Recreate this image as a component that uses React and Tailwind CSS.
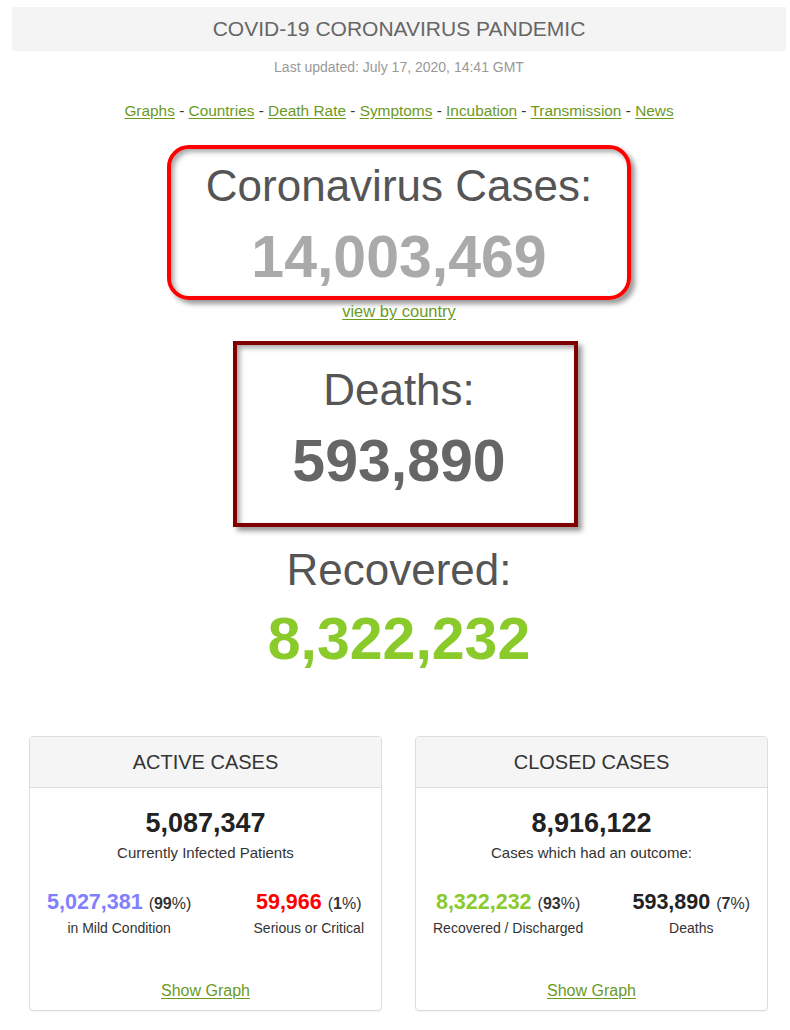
export default function App() {
  const navLinks = ["Graphs", "Countries", "Death Rate", "Symptoms", "Incubation", "Transmission", "News"];

  return (
    <div className="min-h-screen bg-white font-['Liberation_Sans',Arial,sans-serif] pt-[7px] pb-4">
      <div className="ml-[12px] w-[774px]">
        {/* Title bar */}
        <div className="h-[44px] bg-[#f4f4f4] text-center text-[21px] leading-[44px] text-[#666]">
          COVID-19 CORONAVIRUS PANDEMIC
        </div>

        <div className="mt-[9px] text-center text-[14px] leading-[14px] text-[#999]">
          Last updated: July 17, 2020, 14:41 GMT
        </div>

        {/* Nav */}
        <div className="mt-[29px] text-center text-[15.4px] leading-[15px] text-[#333]">
          {navLinks.map((l, i) => (
            <span key={l}>
              <a href="#" className="text-[#6b9a1f] underline underline-offset-2">{l}</a>
              {i < navLinks.length - 1 && " - "}
            </span>
          ))}
        </div>

        {/* Coronavirus cases */}
        <div className="mx-auto mt-[27px] w-[464px] rounded-[22px] border-4 border-[#ff0000] pt-[15px] pb-[9px] text-center shadow-[4px_4px_5px_#9a9a9a,inset_3px_3px_5px_#a8a8a8]">
          <div className="text-[44px] leading-[44px] text-[#555]">Coronavirus Cases:</div>
          <div className="mt-[20px] text-[59px] leading-[59px] font-bold text-[#aaa]">14,003,469</div>
        </div>
        <div className="mt-[3px] text-center text-[16.5px] leading-[16px]">
          <a href="#" className="text-[#6b9a1f] underline underline-offset-2">view by country</a>
        </div>

        {/* Deaths */}
        <div className="ml-[221px] mt-[22px] w-[345px] border-4 border-[#800000] pt-[23px] pb-[32px] pr-[13px] text-center shadow-[4px_4px_5px_#9a9a9a,inset_3px_3px_5px_#a8a8a8]">
          <div className="text-[44px] leading-[44px] text-[#555]">Deaths:</div>
          <div className="mt-[20px] text-[59px] leading-[59px] font-bold text-[#666]">593,890</div>
        </div>

        {/* Recovered */}
        <div className="mt-[21px] text-center">
          <div className="text-[44px] leading-[44px] text-[#555]">Recovered:</div>
          <div className="mt-[18px] text-[59px] leading-[59px] font-bold text-[#8aca2b]">8,322,232</div>
        </div>

        {/* Cards */}
        <div className="mt-[67px] flex gap-[33px] pl-[17px]">
          <Card
            title="ACTIVE CASES"
            total="5,087,347"
            caption="Currently Infected Patients"
            left={{ value: "5,027,381", pct: "99", color: "text-[#8080ff]", label: "in Mild Condition" }}
            right={{ value: "59,966", pct: "1", color: "text-[#ff0000]", label: "Serious or Critical" }}
          />
          <Card
            title="CLOSED CASES"
            total="8,916,122"
            caption="Cases which had an outcome:"
            left={{ value: "8,322,232", pct: "93", color: "text-[#8aca2b]", label: "Recovered / Discharged" }}
            right={{ value: "593,890", pct: "7", color: "text-[#222]", label: "Deaths" }}
          />
        </div>
      </div>
    </div>
  );
}

function Stat({ value, pct, color, label }) {
  return (
    <div className="text-center">
      <div className="text-[21.5px] leading-[22px] whitespace-nowrap">
        <span className={`font-bold ${color}`}>{value}</span>{" "}
        <span className="text-[16px] text-[#333]">
          (<b>{pct}</b>%)
        </span>
      </div>
      <div className="mt-[6px] text-[14px] leading-[14px] text-[#333]">{label}</div>
    </div>
  );
}

function Card({ title, total, caption, left, right }) {
  return (
    <div className="w-[353px] overflow-hidden rounded-[4px] border border-[#ddd] bg-white shadow-[0_1px_1px_rgba(0,0,0,0.05)]">
      <div className="h-[51px] border-b border-[#ddd] bg-[#f5f5f5] text-center text-[20px] leading-[50px] text-[#333]">
        {title}
      </div>
      <div className="pt-[22px] pb-[11px] text-center">
        <div className="text-[27px] leading-[27px] font-bold text-[#222]">{total}</div>
        <div className="mt-[8px] text-[15px] leading-[15px] text-[#333]">{caption}</div>
        <div className="mt-[31px] flex justify-between px-[17px]">
          <Stat {...left} />
          <Stat {...right} />
        </div>
        <div className="mt-[48px] text-[16px] leading-[16px]">
          <a href="#" className="text-[#6b9a1f] underline underline-offset-2">Show Graph</a>
        </div>
      </div>
    </div>
  );
}
